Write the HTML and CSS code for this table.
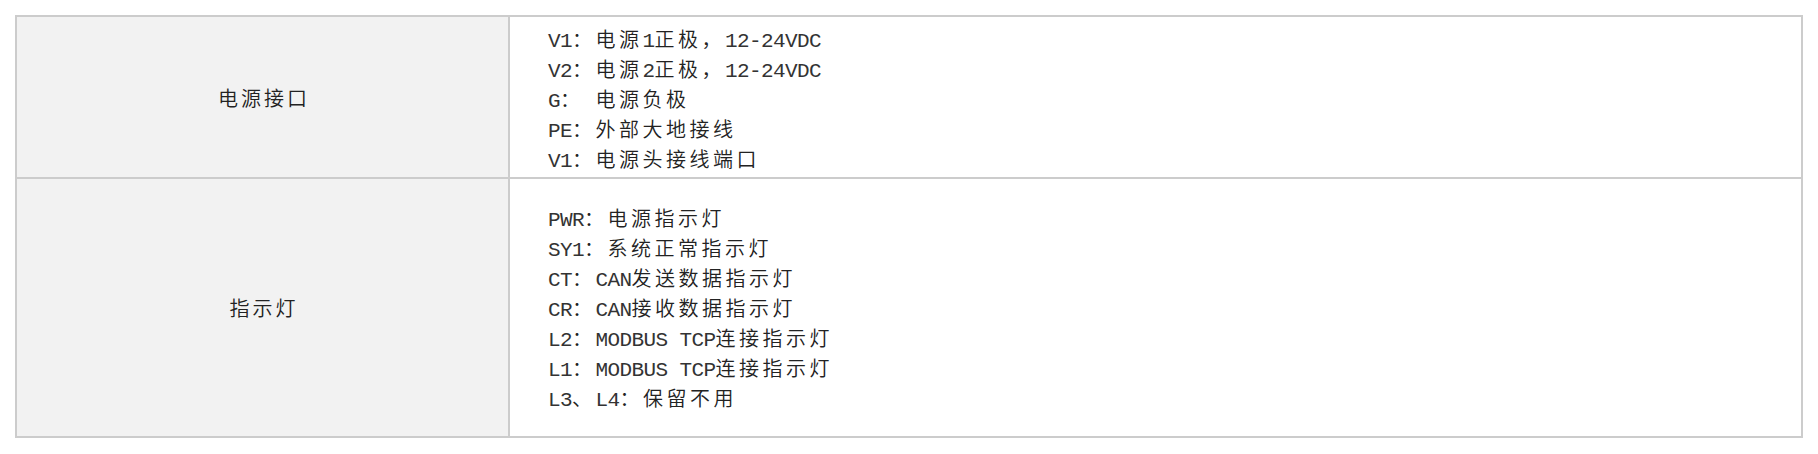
FILE: index.html
```html
<!DOCTYPE html>
<html lang="zh-CN">
<head>
<meta charset="utf-8">
<title>接口说明</title>
<link rel="stylesheet" href="styles.css">
</head>
<body>
<div class="wrap">
  <table class="spec">
    <tbody>
      <tr class="row-power">
        <th class="label">电源接口</th>
        <td class="desc">
          <div class="line"><span class="en">V1</span>：电源<span class="en">1</span>正极，<span class="en">12-24VDC</span></div>
          <div class="line"><span class="en">V2</span>：电源<span class="en">2</span>正极，<span class="en">12-24VDC</span></div>
          <div class="line"><span class="en">G</span>：<span class="en"> </span>电源负极</div>
          <div class="line"><span class="en">PE</span>：外部大地接线</div>
          <div class="line"><span class="en">V1</span>：电源头接线端口</div>
        </td>
      </tr>
      <tr class="row-led">
        <th class="label">指示灯</th>
        <td class="desc">
          <div class="line"><span class="en">PWR</span>：电源指示灯</div>
          <div class="line"><span class="en">SY1</span>：系统正常指示灯</div>
          <div class="line"><span class="en">CT</span>：<span class="en">CAN</span>发送数据指示灯</div>
          <div class="line"><span class="en">CR</span>：<span class="en">CAN</span>接收数据指示灯</div>
          <div class="line"><span class="en">L2</span>：<span class="en">MODBUS TCP</span>连接指示灯</div>
          <div class="line"><span class="en">L1</span>：<span class="en">MODBUS TCP</span>连接指示灯</div>
          <div class="line"><span class="en">L3</span>、<span class="en">L4</span>：保留不用</div>
        </td>
      </tr>
    </tbody>
  </table>
</div>
</body>
</html>
```

FILE: styles.css
```css
html, body {
  margin: 0;
  padding: 0;
  background: #ffffff;
}

.wrap {
  padding: 15px 15px 0 15px;
}

.spec {
  width: 100%;
  border-collapse: collapse;
  border: 2px solid #cccccc;
  color: #222222;
}

.spec th,
.spec td {
  border: 2px solid #cccccc;
}

.label {
  width: 488px;
  background: #f2f2f2;
  font-family: "Noto Sans CJK SC", sans-serif;
  font-size: 20px;
  font-weight: 350;
  letter-spacing: 3px;
  text-align: center;
  vertical-align: middle;
  padding: 0 0 0 3px;
}

.desc {
  font-family: "Noto Sans CJK SC", sans-serif;
  font-size: 20px;
  font-weight: 350;
  letter-spacing: 3.5px;
  line-height: 30px;
  padding: 0 0 0 38px;
  vertical-align: top;
  background: #ffffff;
}

.row-power .desc {
  padding-top: 7px;
  padding-bottom: 3px;
}

.row-led .desc {
  padding-top: 24px;
  padding-bottom: 23px;
}

.line {
  white-space: pre;
  height: 30px;
}

.en {
  font-family: "Liberation Mono", monospace;
  font-size: 21px;
  font-weight: normal;
  letter-spacing: -0.6px;
  color: #333333;
}
```
